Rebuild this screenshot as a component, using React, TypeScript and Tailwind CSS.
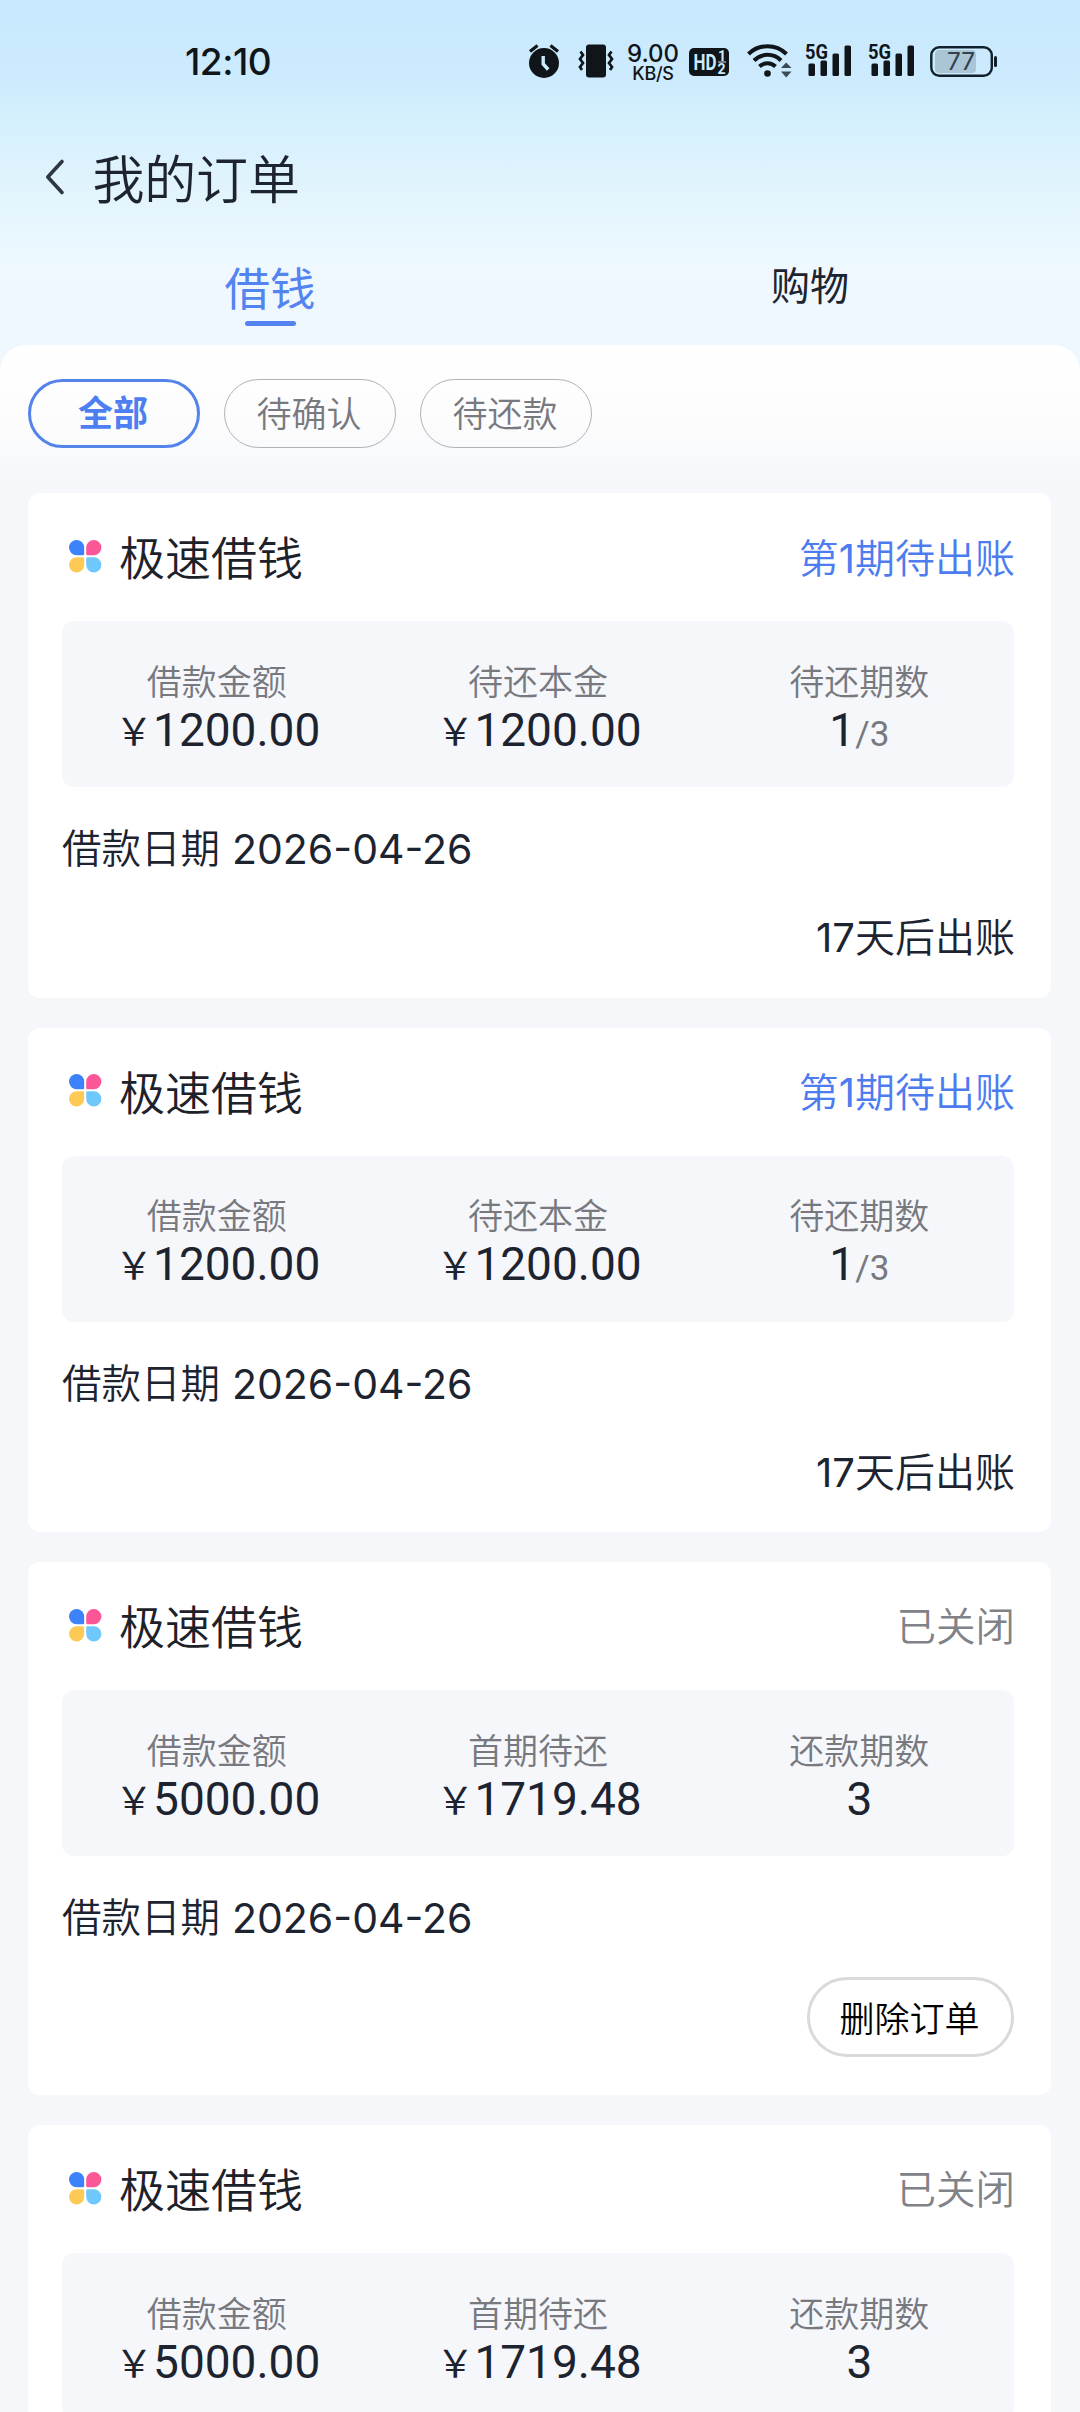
import type { ReactNode } from "react";

const CJK = "font-['Inter','Noto_Sans_CJK_SC',sans-serif]";
const INK = "#0f1519";

function SignalBars() {
  return (
    <svg className="h-[36px] w-[48px] overflow-visible" viewBox="0 0 48 36" fill={INK}>
      <text x="0" y="17" fontSize="20" fontWeight="700" fontFamily="Roboto, sans-serif" textLength="23" lengthAdjust="spacingAndGlyphs">5G</text>
      <rect x="3.5" y="21.5" width="6.5" height="12.5" rx="1.5" />
      <rect x="15.5" y="18.5" width="6.5" height="15.5" rx="1.5" />
      <rect x="27.5" y="11.5" width="6.5" height="22.5" rx="1.5" />
      <rect x="39.5" y="3.5" width="6.5" height="30.5" rx="1.5" />
    </svg>
  );
}

function StatusBar() {
  return (
    <div className="flex h-[120px] items-start pt-[42px] text-[#0f1519]">
      <div className="ml-[185px] w-[344px] font-['Inter'] text-[37px] leading-[40px] font-medium tracking-[-0.5px]">12:10</div>
      <svg className="h-[36px] w-[30px]" viewBox="0 0 30 36">
        <circle cx="15" cy="21" r="15" fill={INK} />
        <path d="M1 9.5 8.500 3.500M29 9.500 21.500 3.500" stroke={INK} strokeWidth="3.200" />
        <path d="M14.200 14v8l5 5.500" stroke="#cdeafd" strokeWidth="3.400" fill="none" />
      </svg>
      <svg className="ml-[19px] h-[36px] w-[36px]" viewBox="0 0 36 36">
        <rect x="8" y="2.500" width="20" height="33" rx="3" fill={INK} />
        <path d="M2.500 9.500 5 13 2 17 5 21 2 25 4 28M33.500 9.500 31 13 34 17 31 21 34 25 32 28" stroke={INK} strokeWidth="2.700" fill="none" />
      </svg>
      <div className="ml-[13px] flex w-[52px] flex-col items-center pt-[2px] font-['Inter'] font-medium">
        <span className="text-[24px] leading-[20px]">9.00</span>
        <span className="text-[18px] leading-[19px] font-medium tracking-[-0.3px]">KB/S</span>
      </div>
      <svg className="ml-[10px] h-[36px] w-[40px]" viewBox="0 0 40 36">
        <rect x="0" y="6" width="40" height="28" rx="5" fill={INK} />
        <g fill="#cdeafd" fontFamily="Roboto, sans-serif" fontWeight="700">
          <text x="4.500" y="28" fontSize="22" textLength="23" lengthAdjust="spacingAndGlyphs">HD</text>
          <text x="29" y="18.500" fontSize="14">1</text>
          <text x="28.500" y="31.500" fontSize="14">2</text>
        </g>
        <path d="M29 20h8" stroke="#cdeafd" strokeWidth="1" />
      </svg>
      <svg className="ml-[18px] h-[36px] w-[46px]" viewBox="0 0 46 36">
        <g fill="none" stroke={INK} strokeWidth="4">
          <path d="M1.500 12a27 27 0 0 1 38 0" />
          <path d="M7 18.500a19 19 0 0 1 27 0" />
          <path d="M12.500 24.500a11.500 11.500 0 0 1 16 0" />
        </g>
        <circle cx="20.500" cy="31.500" r="3.300" fill={INK} />
        <path d="M34 26h10.500L39.200 20.500zM34 29.500h10.500L39.200 35.500z" fill="#3c4a55" />
      </svg>
      <div className="ml-[12px] flex gap-[15px]">
        <SignalBars />
        <SignalBars />
      </div>
      <svg className="ml-[14px] h-[36px] w-[68px]" viewBox="0 0 68 36">
        <rect x="5" y="8" width="41" height="23" rx="4" fill="#a9c5d6" />
        <rect x="1.300" y="5.300" width="60.500" height="28.500" rx="8" fill="none" stroke="#10202c" strokeWidth="2.400" />
        <rect x="64" y="14" width="3" height="11" rx="1.500" fill="#10202c" />
        <text x="17" y="28" fontSize="24.500" fill="#33414c" fontFamily="Inter" textLength="28" lengthAdjust="spacingAndGlyphs">77</text>
      </svg>
    </div>
  );
}

function Flower() {
  return (
    <svg className="h-[33px] w-[33px]" viewBox="0 0 33 33">
      <path d="M7.600 0A7.600 7.600 0 0 1 15.200 7.600V14Q15.200 15.200 14 15.200H7.600A7.600 7.600 0 0 1 7.600 0Z" fill="#3b82fb" />
      <path d="M24.800 0A7.600 7.600 0 0 0 17.200 7.600V14Q17.200 15.200 18.400 15.200H24.800A7.600 7.600 0 0 0 24.800 0Z" fill="#fb5698" />
      <path d="M7.600 32.400A7.600 7.600 0 0 0 15.200 24.800V18.400Q15.200 17.200 14 17.200H7.600A7.600 7.600 0 0 0 7.600 32.400Z" fill="#fdcb55" />
      <path d="M24.800 32.400A7.600 7.600 0 0 1 17.200 24.800V18.400Q17.200 17.200 18.400 17.200H24.800A7.600 7.600 0 0 1 24.800 32.400Z" fill="#6fc8fb" />
    </svg>
  );
}

function Money({ value }: { value: string }) {
  return (
    <span className="pl-[2px]">
      <span className="relative -top-px font-['Noto_Sans_CJK_SC',sans-serif] text-[38px]">￥</span>
      {value}
    </span>
  );
}

function Stat({ label, children }: { label: string; children: ReactNode }) {
  return (
    <div className="flex flex-col items-center">
      <span className="text-[35px] leading-[48px] font-[350] text-[#77797f]">{label}</span>
      <span className="font-['Roboto','Noto_Sans_CJK_SC',sans-serif] text-[46px] leading-[48px] whitespace-nowrap text-[#1d2430]">{children}</span>
    </div>
  );
}

type Order = {
  status: ReactNode;
  closed: boolean;
  stats: { label: string; value: ReactNode }[];
};

const pending: Order = {
  status: <>第<span className="font-normal">1</span>期待出账</>,
  closed: false,
  stats: [
    { label: "借款金额", value: <Money value="1200.00" /> },
    { label: "待还本金", value: <Money value="1200.00" /> },
    { label: "待还期数", value: <>1<span className="text-[35px] text-[#77797f]">/3</span></> },
  ],
};

const closed: Order = {
  status: "已关闭",
  closed: true,
  stats: [
    { label: "借款金额", value: <Money value="5000.00" /> },
    { label: "首期待还", value: <Money value="1719.48" /> },
    { label: "还款期数", value: "3" },
  ],
};

const orders: Order[] = [pending, pending, closed, closed];

function OrderCard({ order }: { order: Order }) {
  return (
    <article className="shrink-0 rounded-[12px] bg-white pr-[37px] pl-[34px]">
      <header className="flex h-[128px] items-center">
        <div className="-mt-[2px] ml-[6.500px]"><Flower /></div>
        <h2 className="ml-[17.500px] pt-[2px] text-[46px] leading-[60px] font-[350] text-[#1d2129]">极速借钱</h2>
        <span className={order.closed ? "-mr-px ml-auto pt-[3px] text-[39.500px] font-[350] text-[#808287]" : "-mr-px ml-auto pt-[3px] text-[40px] font-[350] text-[#4d7cf0]"}>{order.status}</span>
      </header>
      <div className="grid h-[166px] grid-cols-3 gap-3 rounded-[12px] bg-[#f5f7fb] pt-[36.500px]">
        {order.stats.map((s) => (
          <Stat key={s.label} label={s.label}>{s.value}</Stat>
        ))}
      </div>
      <p className="mt-[32px] flex items-center gap-[12px] text-[39.500px] leading-[60px] font-[350] text-[#1d2430]">
        借款日期 <span className="text-[41px] font-normal">2026-04-26</span>
      </p>
      {order.closed ? (
        <div className="mt-[29px] flex h-[118px] items-start justify-end">
          <button className="h-[80px] w-[207px] rounded-full border-[3px] border-[#dadada] pt-[4px] pr-[2px] text-[35px] leading-none font-[350] text-black">删除订单</button>
        </div>
      ) : (
        <p className="-mr-px mt-[29px] h-[89.500px] text-right text-[40px] leading-[60px] font-[350] text-[#1d2430]">
          <span className="font-normal">17</span>天后出账
        </p>
      )}
    </article>
  );
}

export default function App() {
  return (
    <div className={`flex h-[2412px] w-[1080px] flex-col overflow-hidden bg-[#f5f7fb] ${CJK}`}>
      <div className="flex h-[345px] shrink-0 flex-col bg-[linear-gradient(180deg,#c7e8fe_0px,#cdebfd_85px,#d5f1fd_125px,#dcf2fd_160px,#e5f5fd_210px,#ecf9ff_255px,#f0f8ff_275px)]">
        <StatusBar />
        <div className="flex h-[120px] items-center">
          <svg className="-mt-[6px] ml-[45px] h-[38px] w-[20px]" viewBox="0 0 20 38">
            <path d="M17 3.500 2.800 19 17 34.500" fill="none" stroke="#2e3641" strokeWidth="3.600" strokeLinecap="round" strokeLinejoin="round" />
          </svg>
          <h1 className="ml-[27.500px] pt-[2px] text-[52px] leading-[76px] font-[350] tracking-[-0.200px] text-[#1d2430]">我的订单</h1>
        </div>
        <nav className="grid grow grid-cols-2 text-center">
          <div className="flex flex-col items-center pt-[18px] text-[#5484f0]">
            <span className="text-[45.500px] leading-[63px]">借钱</span>
            <span className="h-[5px] w-[51px] rounded-full bg-[#5484f0]" />
          </div>
          <div className="pt-[14px] text-[39px] leading-[63px] text-[#1d2430]">购物</div>
        </nav>
      </div>
      <div className="h-[148px] shrink-0 bg-[linear-gradient(180deg,#f0f8ff_30px,#f5f7fb_31px)]">
        <div className="flex h-full gap-[24px] rounded-t-[26px] bg-[linear-gradient(180deg,#ffffff_0px,#fdfdfe_60px,#f9fafb_110px,#f5f7fa_135px)] pt-[34px] pl-[28px] leading-none">
          <span className="flex h-[69px] w-[172px] items-center justify-center rounded-full border-[3px] border-[#5484ea] pr-[2px] text-[35px] font-bold text-[#4d7ff2]">全部</span>
          <span className="flex h-[69px] w-[172px] items-center justify-center rounded-full border border-[#b0b2b7] pt-px pr-[2px] text-[35px] font-[350] text-[#77797f]">待确认</span>
          <span className="flex h-[69px] w-[172px] items-center justify-center rounded-full border border-[#b0b2b7] pt-px pr-[2px] text-[35px] font-[350] text-[#77797f]">待还款</span>
        </div>
      </div>
      <main className="flex flex-col gap-[30px] pr-[29px] pl-[28px]">
        {orders.map((o, i) => (
          <OrderCard key={i} order={o} />
        ))}
      </main>
    </div>
  );
}
